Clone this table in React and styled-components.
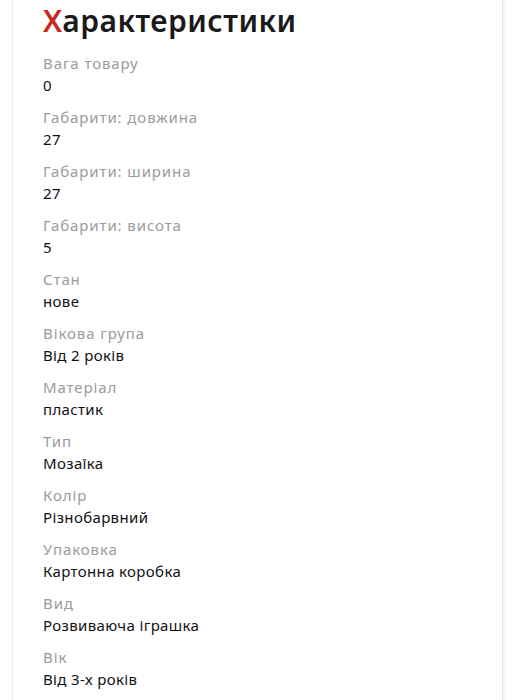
import React from "react";
import styled, { createGlobalStyle } from "styled-components";

const GlobalStyle = createGlobalStyle`
    body {
        margin: 0;
        background: #ffffff;
        font-family: "Noto Sans", "Open Sans", sans-serif;
    }
`;

const Page = styled.div`
    padding: 0 12px 0 12px;
    width: 516px;
    box-sizing: border-box;
`;

const Card = styled.div`
    width: 491px;
    box-sizing: border-box;
    background: #ffffff;
    padding: 6px 30px 20px 30px;
    border-left: 1px solid #ececec;
    border-right: 1px solid #e6e6e6;
    box-shadow: 2px 0 3px rgba(0, 0, 0, 0.06);
`;

const Title = styled.h2`
    margin: 0 0 16px 0;
    font-size: 30px;
    font-weight: 600;
    letter-spacing: 0.5px;
    color: #1a1a1a;
    line-height: 30px;
    span {
        color: #c8281e;
    }
`;

const List = styled.dl`
    margin: 0;
    display: flex;
    flex-direction: column;
    gap: 10px;
`;

const Item = styled.div`
    display: flex;
    flex-direction: column;
`;

const Label = styled.dt`
    font-size: 15px;
    line-height: 22px;
    letter-spacing: 0.9px;
    color: #9b9b9b;
`;

const Value = styled.dd`
    margin: 0;
    font-size: 15px;
    line-height: 22px;
    letter-spacing: 0.35px;
    color: #111111;
`;

const specs = [
    ["Вага товару", "0"],
    ["Габарити: довжина", "27"],
    ["Габарити: ширина", "27"],
    ["Габарити: висота", "5"],
    ["Стан", "нове"],
    ["Вікова група", "Від 2 років"],
    ["Матеріал", "пластик"],
    ["Тип", "Мозаїка"],
    ["Колір", "Різнобарвний"],
    ["Упаковка", "Картонна коробка"],
    ["Вид", "Розвиваюча іграшка"],
    ["Вік", "Від 3-х років"],
];

const App = () => {
    return (
        <>
            <GlobalStyle />
            <Page>
                <Card>
                    <Title>
                        <span>Х</span>арактеристики
                    </Title>
                    <List>
                        {specs.map(([label, value]) => (
                            <Item key={label}>
                                <Label>{label}</Label>
                                <Value>{value}</Value>
                            </Item>
                        ))}
                    </List>
                </Card>
            </Page>
        </>
    );
};

export default App;
